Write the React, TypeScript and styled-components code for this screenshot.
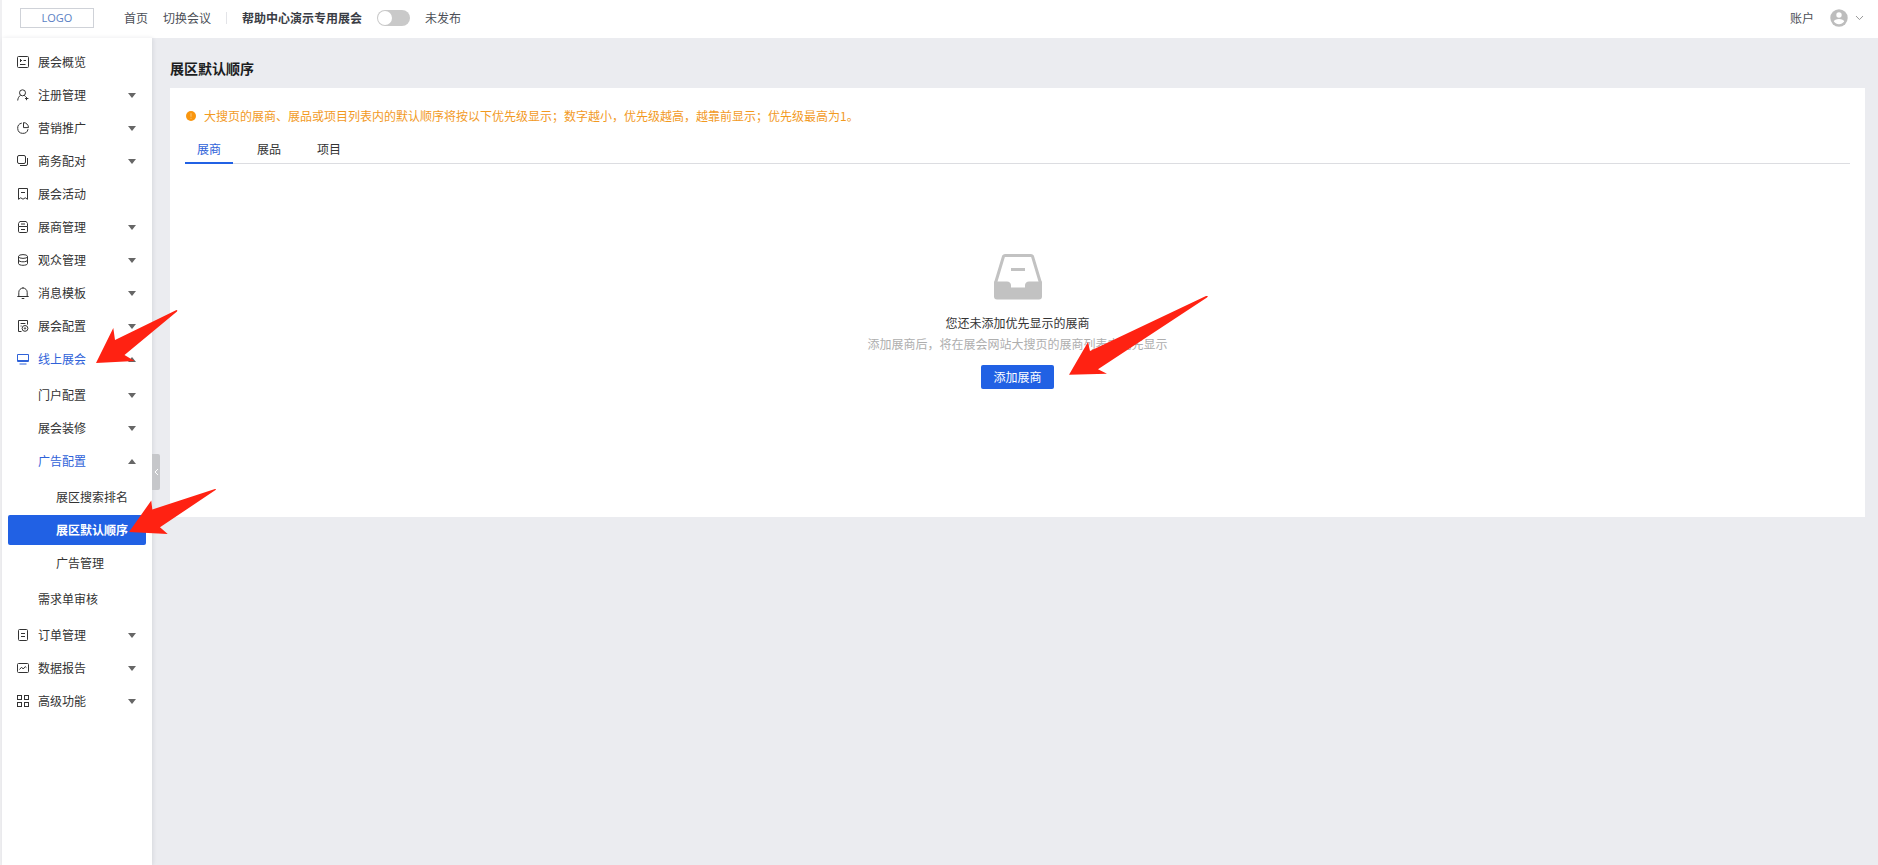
import React, { useState } from "react";
import styled, { createGlobalStyle, css } from "styled-components";

const blue = "#2161e4";
const linkBlue = "#2f62d9";

const GlobalStyle = createGlobalStyle`
  *, *::before, *::after { box-sizing: border-box; }
  body {
    margin: 0;
    background: #ebecf0;
    color: #333;
    font: 12px/18px "Noto Sans CJK SC", "Liberation Sans", sans-serif;
  }
  button, input { font: inherit; color: inherit; }
  a { color: inherit; text-decoration: none; }
`;

const Page = styled.div`
  display: flex;
  flex-direction: column;
  min-height: 100vh;
  border-left: 2px solid #f0f0f2;
`;

const Header = styled.header`
  display: flex;
  align-items: center;
  height: 38px;
  padding: 0 14px 2px 18px;
  background: #fff;
  color: #4c4f57;
`;

const Logo = styled.a`
  width: 74px;
  height: 20px;
  margin-right: 30px;
  border: 1px solid #cfd2d8;
  color: #5a7fc4;
  font-family: "Open Sans", sans-serif;
  font-size: 11px;
  line-height: 18px;
  text-align: center;
`;

const HeaderNav = styled.nav`
  display: flex;
  gap: 15px;
  padding-right: 15px;
  border-right: 1px solid #e3e4e8;
  line-height: 12px;
`;

const EventName = styled.strong`
  margin: 0 15px;
  color: #3a3d45;
  font-weight: 700;
`;

const PublishLabel = styled.label`
  display: flex;
  align-items: center;
  gap: 15px;
`;

const Switch = styled.input`
  appearance: none;
  display: flex;
  align-items: center;
  width: 33px;
  height: 16px;
  margin: 0;
  padding: 1px;
  border-radius: 8px;
  background: #c9c9c9;
  cursor: pointer;

  &::before {
    content: "";
    width: 14px;
    height: 14px;
    border-radius: 50%;
    background: #fff;
  }
  &:checked {
    justify-content: flex-end;
    background: ${blue};
  }
`;

const Account = styled.button`
  display: flex;
  align-items: center;
  margin-left: auto;
  padding: 0;
  border: 0;
  background: none;
  cursor: pointer;

  .avatar { margin: 0 7px 0 16px; }
`;

const Body = styled.div`
  display: flex;
  flex: 1;
`;

const Sidebar = styled.aside`
  position: relative;
  flex: none;
  width: 150px;
  padding: 9px 6px;
  background: #fff;
  box-shadow: 1px 0 4px rgba(30, 35, 60, 0.1);
`;

const NavList = styled.ul<{ $nested?: boolean }>`
  display: flex;
  flex-direction: column;
  gap: 3px;
  margin: 0;
  padding: ${(p) => (p.$nested ? "6px 0 3px" : "0")};
  list-style: none;
`;

const NavRow = styled.a<{ $level: number; $open?: boolean; $active?: boolean }>`
  position: relative;
  display: flex;
  align-items: center;
  height: 30px;
  padding-left: ${(p) => [9, 30, 48][p.$level]}px;
  padding-right: 10px;
  border-radius: 2px;
  color: ${(p) => (p.$open ? linkBlue : "#333")};
  ${(p) =>
    p.$active &&
    css`
      background: ${blue};
      color: #fff;
      font-weight: 700;
    `}
`;

const NavIcon = styled.svg`
  width: 12px;
  height: 12px;
  margin-right: 9px;
  fill: none;
  stroke: currentColor;
  overflow: visible;
`;

const Caret = styled.svg`
  width: 8px;
  height: 5px;
  margin-left: auto;
  fill: #666;
`;

const Collapse = styled.button`
  position: absolute;
  top: 416px;
  left: 100%;
  display: flex;
  align-items: center;
  justify-content: center;
  width: 8px;
  height: 36px;
  padding: 0;
  border: 0;
  border-radius: 0 2px 2px 0;
  background: #c6c7ca;
  cursor: pointer;
`;

const Main = styled.main`
  flex: 1;
  min-width: 0;
  padding: 19px 13px 20px 18px;
`;

const Title = styled.h1`
  margin: 0 0 9px;
  color: #1c1d21;
  font-size: 14px;
  font-weight: 700;
  line-height: 22px;
`;

const Card = styled.section`
  padding: 19px 15px 128px;
  background: #fff;
`;

const Notice = styled.p`
  display: flex;
  align-items: center;
  gap: 8px;
  margin: 0 0 12px;
  color: #f29a1f;

  svg { margin-left: 1px; }
`;

const Tabs = styled.div`
  display: flex;
  gap: 12px;
  border-bottom: 1px solid #dcdde1;
`;

const Tab = styled.button<{ $active: boolean }>`
  height: 27px;
  margin-bottom: -1px;
  padding: 0 12px 1px;
  border: 0;
  border-bottom: 2px solid ${(p) => (p.$active ? blue : "transparent")};
  background: none;
  color: ${(p) => (p.$active ? linkBlue : "#333")};
  cursor: pointer;
`;

const Empty = styled.div`
  display: flex;
  flex-direction: column;
  align-items: center;
  padding-top: 90px;
`;

const EmptyTitle = styled.p`
  margin: 14px 0 3px;
`;

const EmptyHint = styled.p`
  margin: 0 0 12px;
  color: #aeaeae;
`;

const ButtonWrap = styled.div`
  position: relative;
`;

const PrimaryButton = styled.button`
  height: 24px;
  padding: 0 12px;
  border: 0;
  border-radius: 2px;
  background: ${blue};
  color: #fff;
  cursor: pointer;
`;

const Pointer = styled.svg<{ $left: number; $top: number }>`
  position: absolute;
  z-index: 2;
  left: ${(p) => p.$left}px;
  top: ${(p) => p.$top}px;
  fill: #ff2212;
  pointer-events: none;
`;

const icons: Record<string, React.ReactNode> = {
  overview: (
    <>
      <rect x="0.5" y="0.5" width="11" height="11" rx="1" />
      <path d="M3.5 3v3M3 4.5h2M6.5 4.5h2.5M3 8.5h5.5" />
    </>
  ),
  register: (
    <>
      <circle cx="5.5" cy="3.8" r="3" />
      <path d="M3.6 6.2C1.8 7.4 1 9 .7 11.5M7.2 6.3l1.5 1.4M9.5 8v3.2M8 9.5h3.4" />
    </>
  ),
  marketing: (
    <>
      <path d="M4.8 1.1A5.2 5.2 0 1 0 11 7.2" />
      <path d="M6.5 .6v5h5A5 5 0 0 0 6.5 .6z" />
    </>
  ),
  matching: (
    <>
      <rect x="0.5" y="0.5" width="8" height="8" rx="1.5" />
      <path d="M10.5 3v6a1.5 1.5 0 0 1-1.5 1.5H3" />
    </>
  ),
  activity: (
    <>
      <path d="M1.5 .5h9v10.8L8.3 9.8 6 11.2 3.7 9.8 1.5 11.3z" />
      <path d="M4 4.5h4" />
    </>
  ),
  exhibitor: (
    <>
      <path d="M2.8 .5h6.4l1.3 2v3h-9v-3zM1.5 5.5v4.8a1.2 1.2 0 0 0 1.2 1.2h6.6a1.2 1.2 0 0 0 1.2-1.2V5.5M4 3h4M4 8.5h4" />
    </>
  ),
  audience: (
    <>
      <ellipse cx="6" cy="2.5" rx="4.5" ry="1.9" />
      <path d="M1.5 2.5v7c0 2.4 9 2.4 9 0v-7M1.5 6c0 2.4 9 2.4 9 0" />
    </>
  ),
  message: <path d="M.3 9.5h11.4M1.8 9.4V5.3a4.2 4.2 0 0 1 8.4 0v4.1M6 1V0M4.7 11.5h2.6" />,
  config: (
    <>
      <path d="M10.5 4.6V.5h-9v11h3M3.6 3.5h4.8M3.6 6h1" />
      <circle cx="8" cy="8.4" r="2.9" />
      <circle cx="8" cy="8.4" r="0.7" />
    </>
  ),
  online: <path d="M.5 1.5h11v7H.5zM2.5 11h7M.5 7.5h11" />,
  order: (
    <>
      <rect x="1.5" y="0.5" width="9" height="11" rx="1" />
      <path d="M4 4.5h4M4 7.5h4" />
    </>
  ),
  report: (
    <>
      <rect x="0.5" y="1.5" width="11" height="9" rx="1" />
      <path d="M2.5 7.5 4.6 5.2 6.2 7l2-2.4 1.2 1" />
    </>
  ),
  advanced: (
    <>
      <rect x="0.5" y="0.5" width="4" height="4" />
      <rect x="7.5" y="0.5" width="4" height="4" />
      <rect x="0.5" y="7.5" width="4" height="4" />
      <rect x="7.5" y="7.5" width="4" height="4" />
    </>
  ),
};

interface Item {
  label: string;
  icon?: string;
  caret?: boolean;
  active?: boolean;
  pointer?: React.ReactNode;
  children?: Item[];
}

const menu: Item[] = [
  { label: "展会概览", icon: "overview" },
  { label: "注册管理", icon: "register", caret: true },
  { label: "营销推广", icon: "marketing", caret: true },
  { label: "商务配对", icon: "matching", caret: true },
  { label: "展会活动", icon: "activity" },
  { label: "展商管理", icon: "exhibitor", caret: true },
  { label: "观众管理", icon: "audience", caret: true },
  { label: "消息模板", icon: "message", caret: true },
  { label: "展会配置", icon: "config", caret: true },
  {
    label: "线上展会",
    icon: "online",
    caret: true,
    pointer: (
      <Pointer $left={88} $top={-34} width="82" height="54" aria-hidden="true">
        <path d="M0 53 17.3 18 19 30 80.5 0Q82 0 81 1.5L28.5 45 38.5 51z" />
      </Pointer>
    ),
    children: [
      { label: "门户配置", caret: true },
      { label: "展会装修", caret: true },
      {
        label: "广告配置",
        caret: true,
        children: [
          { label: "展区搜索排名" },
          {
            label: "展区默认顺序",
            active: true,
            pointer: (
              <Pointer $left={121} $top={-27} width="88" height="46" aria-hidden="true">
                <path d="M0 44 22.3 12.5 23.3 21.5 86 1Q88 1 86.5 2L31 39.3 38.7 46z" />
              </Pointer>
            ),
          },
          { label: "广告管理" },
        ],
      },
      { label: "需求单审核" },
    ],
  },
  { label: "订单管理", icon: "order", caret: true },
  { label: "数据报告", icon: "report", caret: true },
  { label: "高级功能", icon: "advanced", caret: true },
];

function NavItems({ items, level = 0 }: { items: Item[]; level?: number }) {
  return (
    <NavList $nested={level > 0}>
      {items.map((item) => (
        <li key={item.label}>
          <NavRow
            href="#"
            $level={level}
            $open={!!item.children}
            $active={item.active}
            aria-current={item.active ? "page" : undefined}
          >
            {item.icon && (
              <NavIcon viewBox="0 0 12 12" aria-hidden="true">
                {icons[item.icon]}
              </NavIcon>
            )}
            {item.label}
            {item.caret && (
              <Caret viewBox="0 0 8 5" aria-hidden="true">
                <path d={item.children ? "M0 5 4 0 8 5z" : "M0 0h8L4 5z"} />
              </Caret>
            )}
            {item.pointer}
          </NavRow>
          {item.children && <NavItems items={item.children} level={level + 1} />}
        </li>
      ))}
    </NavList>
  );
}

const tabs = ["展商", "展品", "项目"];

export default function App() {
  const [tab, setTab] = useState(tabs[0]);
  return (
    <Page>
      <GlobalStyle />
      <Header>
        <Logo href="#">LOGO</Logo>
        <HeaderNav>
          <a href="#">首页</a>
          <a href="#">切换会议</a>
        </HeaderNav>
        <EventName>帮助中心演示专用展会</EventName>
        <PublishLabel>
          <Switch type="checkbox" role="switch" />
          未发布
        </PublishLabel>
        <Account type="button">
          账户
          <svg className="avatar" width="18" height="18" viewBox="0 0 18 18" aria-hidden="true">
            <circle cx="9" cy="9" r="8.7" fill="#bdbdbd" />
            <circle cx="9" cy="6" r="2.7" fill="#fff" />
            <path d="M3.8 12.6c.2-3.6 10.2-3.6 10.4 0-2.4 3.4-8 3.4-10.4 0z" fill="#fff" />
          </svg>
          <svg width="9" height="6" viewBox="0 0 9 6" fill="none" stroke="#999" aria-hidden="true">
            <path d="M1 1l3.5 3.6L8 1" />
          </svg>
        </Account>
      </Header>
      <Body>
        <Sidebar>
          <NavItems items={menu} />
          <Collapse type="button" aria-label="收起菜单">
            <svg width="5" height="8" viewBox="0 0 5 8" fill="none" stroke="#fff" aria-hidden="true">
              <path d="M4 1 1 4l3 3" />
            </svg>
          </Collapse>
        </Sidebar>
        <Main>
          <Title>展区默认顺序</Title>
          <Card>
            <Notice>
              <svg width="10" height="10" viewBox="0 0 10 10" aria-hidden="true">
                <circle cx="5" cy="5" r="5" fill="#f9960f" />
                <path d="M5 2.2v3.6M5 6.8v1" stroke="#fcc77a" />
              </svg>
              大搜页的展商、展品或项目列表内的默认顺序将按以下优先级显示；数字越小，优先级越高，越靠前显示；优先级最高为1。
            </Notice>
            <Tabs role="tablist">
              {tabs.map((name) => (
                <Tab
                  key={name}
                  type="button"
                  role="tab"
                  aria-selected={tab === name}
                  $active={tab === name}
                  onClick={() => setTab(name)}
                >
                  {name}
                </Tab>
              ))}
            </Tabs>
            <Empty>
              <svg width="48" height="46" viewBox="0 0 48 46" aria-hidden="true">
                <path
                  d="M1.5 29 9.5 2.3Q10 1.5 11 1.5H37Q38 1.5 38.5 2.3L46.5 29"
                  fill="none"
                  stroke="#c2c2c2"
                  strokeWidth="3"
                />
                <path
                  d="M0 27.5H13Q16.5 27.5 17 31V33.5H31V31Q31.5 27.5 35 27.5H48V42.5Q48 45.5 45 45.5H3Q0 45.5 0 42.5z"
                  fill="#c2c2c2"
                />
                <path d="M17 15.5H31" stroke="#c2c2c2" strokeWidth="3" />
              </svg>
              <EmptyTitle>您还未添加优先显示的展商</EmptyTitle>
              <EmptyHint>添加展商后，将在展会网站大搜页的展商列表中优先显示</EmptyHint>
              <ButtonWrap>
                <PrimaryButton type="button">添加展商</PrimaryButton>
                <Pointer $left={88} $top={-69} width="140" height="79" aria-hidden="true">
                  <path d="M0 78.7 19 46 21 55 137 0Q140 -.5 138 1.5L29 73.3 38 77.7z" />
                </Pointer>
              </ButtonWrap>
            </Empty>
          </Card>
        </Main>
      </Body>
    </Page>
  );
}
